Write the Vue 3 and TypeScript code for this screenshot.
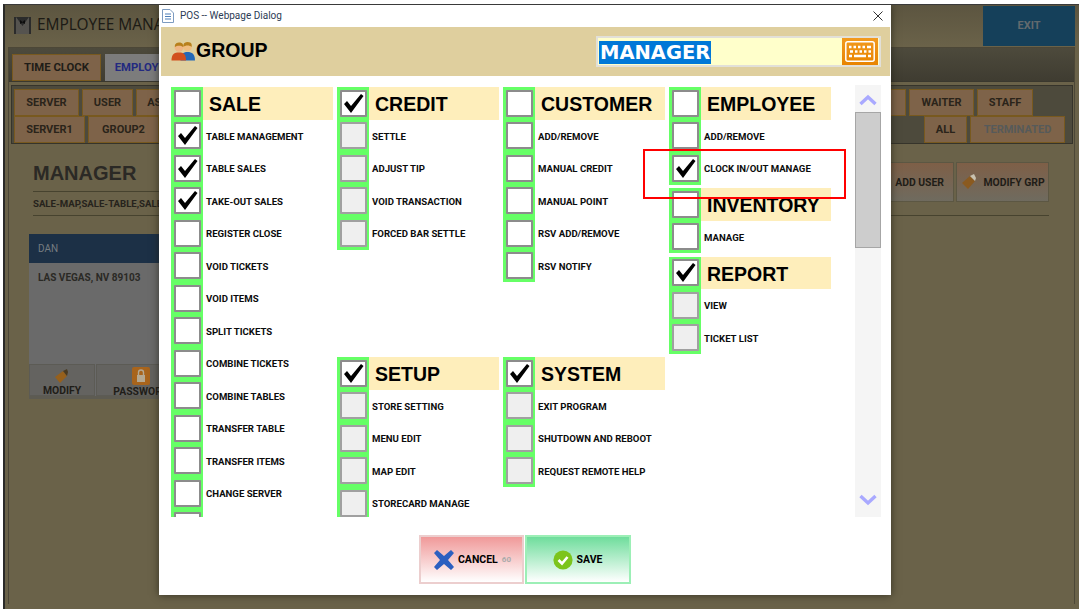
<template>
  <div class="app">
    <div class="top-bar">
      <svg class="tux" width="17" height="17" viewBox="0 0 17 17">
        <rect width="17" height="17" fill="#2b2b2b" />
        <path d="M2 0 L8.5 9 L15 0 L15 17 L2 17 Z" fill="#55534f" />
        <path d="M6 3 L8.5 5 L11 3 L11 7 L8.5 5.5 L6 7 Z" fill="#0c0c0c" />
      </svg>
      <span class="app-title">EMPLOYEE MANAGEMENT</span>
      <div class="exit">EXIT</div>
    </div>

    <div class="panel">
      <div class="tabstrip">
        <div class="tab">TIME CLOCK</div>
        <div class="tab active">EMPLOYEE</div>
      </div>

      <div class="subtabs">
        <div class="subrow">
          <div class="subtab w-server">SERVER</div>
          <div class="subtab w-user">USER</div>
          <div class="subtab w-as">ASSIST</div>
          <div class="spacer"></div>
          <div class="subtab w-bar">BAR</div>
          <div class="subtab w-waiter">WAITER</div>
          <div class="subtab w-staff">STAFF</div>
          <div class="end-gap-a"></div>
        </div>
        <div class="subrow">
          <div class="subtab w-server1">SERVER1</div>
          <div class="subtab w-group2">GROUP2</div>
          <div class="spacer"></div>
          <div class="subtab w-all">ALL</div>
          <div class="subtab w-term muted">TERMINATED</div>
          <div class="end-gap-b"></div>
        </div>
      </div>

      <div class="group-info">
        <div class="info-left">
          <div class="info-name">MANAGER</div>
          <div class="info-perms">SALE-MAP,SALE-TABLE,SALE-TOGO</div>
        </div>
        <div class="info-buttons">
          <div class="info-btn w-add">ADD USER</div>
          <div class="info-btn w-mod">
            <svg width="18" height="18" viewBox="0 0 18 18">
              <path d="M2 10 L10 3 L15 8 L8 16 Z" fill="#8a5a20" />
              <path d="M10 3 L14 1 L16 5 L15 8 Z" fill="#c9c2b0" />
            </svg>
            MODIFY GRP
          </div>
        </div>
      </div>

      <div class="user-card">
        <div class="card-head">DAN</div>
        <div class="card-body">LAS VEGAS, NV 89103</div>
        <div class="card-foot">
          <div class="card-btn">
            <svg width="16" height="16" viewBox="0 0 16 16">
              <path d="M1 9 L9 3 L13 8 L6 15 Z" fill="#96601c" />
              <path d="M9 3 L13 1 L14 4 L13 8 Z" fill="#4a3a20" />
            </svg>
            <span>MODIFY</span>
          </div>
          <div class="card-btn">
            <svg width="18" height="18" viewBox="0 0 18 18">
              <rect width="18" height="18" rx="2" fill="#a8641c" />
              <rect x="5" y="8" width="8" height="7" fill="#b5a890" />
              <path d="M6.5 8 V5.5 a2.5 2.5 0 0 1 5 0 V8" fill="none" stroke="#b5a890" stroke-width="1.4" />
            </svg>
            <span>PASSWORD</span>
          </div>
        </div>
      </div>
    </div>

    <div class="dialog">
      <div class="dialog-title">
        <svg width="12" height="14" viewBox="0 0 12 14">
          <path d="M.5.5 H8 L11.5 4 V13.5 H.5 Z" fill="#fff" stroke="#7d9bc0" />
          <path d="M3 5 H9 M3 7.5 H9 M3 10 H9" stroke="#4f7fb8" />
        </svg>
        <span>POS -- Webpage Dialog</span>
        <svg class="close" width="10" height="10" viewBox="0 0 10 10">
          <path d="M.5.5 L9.5 9.5 M9.5.5 L.5 9.5" stroke="#333" />
        </svg>
      </div>

      <div class="dialog-head">
        <svg class="people" width="25" height="19" viewBox="0 0 25 19">
          <circle cx="16.5" cy="5" r="4.4" fill="#f0bd80" />
          <path d="M16.5 0 C12 0 12 4 12.5 5 C14 3 19 3 20.5 5 C21 3 21 0 16.5 0 Z" fill="#b8801c" />
          <path d="M9.5 18.5 C9.5 12 12 10 16.5 10 C21 10 24 12 24 18.5 Z" fill="#2468b8" />
          <circle cx="8" cy="5.5" r="4.4" fill="#efb684" />
          <path d="M8 .6 C4 .6 3.6 4 4 5 C6 3.4 10 3.4 12 5 C12.4 3 12 .6 8 .6 Z" fill="#b8801c" />
          <path d="M.5 18.5 C.5 12 3.5 10.5 8 10.5 C12.5 10.5 15 12 15 18.5 Z" fill="#d2501e" />
        </svg>
        <span class="group-word">GROUP</span>
        <div class="name-input">
          <span class="selected">MANAGER</span>
          <div class="kbd-btn">
            <svg width="30" height="21" viewBox="0 0 30 21">
              <rect x=".8" y=".8" width="28.4" height="19.4" rx="2" fill="none" stroke="#fff" stroke-width="1.5" />
              <path d="M4 6 H6.5 M8.5 6 H11 M13 6 H15.5 M17.5 6 H20 M22 6 H26 M5 10.5 H8 M10 10.5 H12.5 M14.5 10.5 H17 M19 10.5 H21.5 M23.5 10.5 H26 M4 15 H7 M9 15 H21 M23 15 H26" stroke="#fff" stroke-width="2.4" />
            </svg>
          </div>
        </div>
      </div>

      <div class="dialog-body">
        <div class="columns">
          <div v-for="(col, c) in columns" :key="c" class="column">
            <section
              v-for="grp in col"
              :key="grp.title"
              class="perm-group"
              :style="{ marginTop: grp.offset + 'px' }"
            >
              <div class="perm-row">
                <div class="cell">
                  <div class="box">
                    <svg v-if="grp.on" viewBox="0 0 27 27" class="tick"><path :d="tick" /></svg>
                  </div>
                </div>
                <div class="head-text">{{ grp.title }}</div>
              </div>
              <div v-for="item in grp.items" :key="item.name" class="perm-row">
                <div class="cell">
                  <div class="box" :class="{ locked: grp.on }">
                    <svg v-if="item.on" viewBox="0 0 27 27" class="tick"><path :d="tick" /></svg>
                  </div>
                </div>
                <div class="label">{{ item.name }}</div>
              </div>
            </section>
          </div>
        </div>

        <div class="scrollbar">
          <svg width="18" height="12" viewBox="0 0 18 12">
            <path d="M1.5 10 L9 3 L16.5 10" fill="none" stroke="#a9a9ff" stroke-width="3.4" />
          </svg>
          <div class="thumb"></div>
          <div class="spacer"></div>
          <svg width="18" height="12" viewBox="0 0 18 12">
            <path d="M1.5 2 L9 9 L16.5 2" fill="none" stroke="#a9a9ff" stroke-width="3.4" />
          </svg>
        </div>
      </div>

      <div class="dialog-foot">
        <div class="foot-btn cancel">
          <svg width="20" height="20" viewBox="0 0 20 20">
            <path d="M3 0 L10 6 L17 0 L20 3 L14 10 L20 17 L17 20 L10 14 L3 20 L0 17 L6 10 L0 3 Z" fill="#2b5fc0" />
          </svg>
          <span>CANCEL</span>
          <small>60</small>
        </div>
        <div class="foot-btn save">
          <svg width="20" height="20" viewBox="0 0 20 20">
            <circle cx="10" cy="10" r="9.6" fill="#7cc41c" />
            <path d="M5.5 10 L9 13.5 L14.5 7" fill="none" stroke="#fff" stroke-width="2.6" />
          </svg>
          <span>SAVE</span>
        </div>
      </div>

      <div class="highlight"></div>
    </div>
  </div>
</template>

<script setup lang="ts">
interface PermItem {
  name: string;
  on?: boolean;
}
interface PermGroup {
  title: string;
  on?: boolean;
  offset?: number;
  items: PermItem[];
}

const tick = "M4 14 L7 11 L11 16 L21 4 L23.5 6 L11 23 Z";

const names = (...list: string[]): PermItem[] => list.map((name) => ({ name }));

const columns: PermGroup[][] = [
  [
    {
      title: "SALE",
      items: [
        { name: "TABLE MANAGEMENT", on: true },
        { name: "TABLE SALES", on: true },
        { name: "TAKE-OUT SALES", on: true },
        ...names(
          "REGISTER CLOSE",
          "VOID TICKETS",
          "VOID ITEMS",
          "SPLIT TICKETS",
          "COMBINE TICKETS",
          "COMBINE TABLES",
          "TRANSFER TABLE",
          "TRANSFER ITEMS",
          "CHANGE SERVER",
          " ",
        ),
      ],
    },
  ],
  [
    {
      title: "CREDIT",
      on: true,
      items: names("SETTLE", "ADJUST TIP", "VOID TRANSACTION", "FORCED BAR SETTLE"),
    },
    {
      title: "SETUP",
      on: true,
      offset: 107.5,
      items: names("STORE SETTING", "MENU EDIT", "MAP EDIT", "STORECARD MANAGE"),
    },
  ],
  [
    {
      title: "CUSTOMER",
      items: names("ADD/REMOVE", "MANUAL CREDIT", "MANUAL POINT", "RSV ADD/REMOVE", "RSV NOTIFY"),
    },
    {
      title: "SYSTEM",
      on: true,
      offset: 75,
      items: names("EXIT PROGRAM", "SHUTDOWN AND REBOOT", "REQUEST REMOTE HELP"),
    },
  ],
  [
    {
      title: "EMPLOYEE",
      items: [{ name: "ADD/REMOVE" }, { name: "CLOCK IN/OUT MANAGE", on: true }],
    },
    { title: "INVENTORY", offset: 3.5, items: names("MANAGE") },
    { title: "REPORT", on: true, offset: 3.5, items: names("VIEW", "TICKET LIST") },
  ],
];
</script>

<style scoped>
.app {
  position: relative;
  box-sizing: border-box;
  margin: 4px 0 0 3px;
  height: 605px;
  overflow: hidden;
  background: #6a6249;
  border-top: 1px solid #3a3a3a;
  border-left: 2px solid #2a2a28;
  font-family: Roboto, "Liberation Sans", sans-serif;
  color: #1f1d18;
}
.spacer {
  flex: 1;
}

/* page behind the dialog */
.top-bar {
  display: flex;
  align-items: center;
  height: 41px;
  padding-left: 9px;
  background: linear-gradient(#5c5540, #6a6249);
}
.app-title {
  margin: -2px 0 0 6px;
  width: 122px;
  overflow: hidden;
  white-space: nowrap;
  font: 15.4px "Noto Sans", sans-serif;
  color: #1d1b16;
}
.exit {
  margin-left: auto;
  margin-right: 4px;
  width: 92px;
  height: 40px;
  line-height: 40px;
  text-align: center;
  background: #15405a;
  color: #636a6e;
  font-weight: 700;
  font-size: 11px;
}
.panel {
  margin: 1px 4px 0 3px;
  height: 556px;
  border: 1px solid #4c4737;
  border-bottom: 0;
}
.tabstrip {
  display: flex;
  align-items: flex-end;
  gap: 4px;
  height: 33px;
  padding-left: 3px;
  background: linear-gradient(#4d4a3c, #3f3c31);
  border-bottom: 1px solid #3a382e;
}
.tab {
  box-sizing: border-box;
  width: 89px;
  height: 27px;
  line-height: 25px;
  text-align: center;
  background: #7e6349;
  border: 1px solid #78591f;
  font-size: 11.3px;
  font-weight: 700;
}
.tab.active {
  width: 76px;
  background: #7c7c7c;
  border-color: #7c7c7c;
  color: #232a80;
}
.subtabs {
  margin: 3px 1px 0 2px;
  height: 59px;
  box-sizing: border-box;
  padding-top: 3px;
  background: #4d4a3c;
  border: 1px solid #36342b;
}
.subrow {
  display: flex;
  gap: 3px;
  padding-left: 2px;
}
.subtab {
  box-sizing: border-box;
  height: 27px;
  line-height: 25px;
  text-align: center;
  background: #7e6349;
  border: 1px solid #78591f;
  font-size: 11px;
  font-weight: 700;
  color: #2a241a;
  white-space: nowrap;
  overflow: hidden;
}
.subtab.muted {
  color: #565a5a;
}
.w-server { width: 65px; }
.w-user { width: 51px; }
.w-as { width: 60px; }
.w-bar { width: 60px; }
.w-waiter { width: 65px; }
.w-staff { width: 56px; }
.w-server1 { width: 71px; }
.w-group2 { width: 71px; }
.w-all { width: 43px; }
.w-term { width: 95px; }
.end-gap-a { width: 36px; }
.end-gap-b { width: 4px; }
.group-info {
  display: flex;
  margin: 18px 25px 0 24px;
  height: 53px;
  border-bottom: 1px solid #47432f;
}
.info-left {
  flex: 1;
  min-width: 0;
}
.info-name {
  height: 29px;
  line-height: 22px;
  font-size: 20px;
  font-weight: 700;
  color: #2b2925;
  font-family: "Liberation Sans", sans-serif;
  border-bottom: 1px solid #47432f;
}
.info-perms {
  margin-top: 6px;
  font-size: 9.6px;
  font-weight: 700;
  color: #26231c;
}
.info-buttons {
  display: flex;
  gap: 2px;
  height: 40px;
}
.info-btn {
  display: flex;
  align-items: center;
  justify-content: center;
  gap: 5px;
  box-sizing: border-box;
  background: linear-gradient(#7e5f47, #6f6b5f);
  border: 1px solid #5c5743;
  font-size: 10.4px;
  font-weight: 700;
}
.w-add {
  width: 90px;
  justify-content: flex-end;
  padding-right: 9px;
}
.w-mod { width: 93px; }
.user-card {
  margin: 18px 0 0 20px;
  width: 320px;
  height: 162px;
  display: flex;
  flex-direction: column;
  background: #6a6a6a;
  border-bottom: 3px solid #5d5b52;
}
.card-head {
  height: 29px;
  line-height: 29px;
  padding-left: 9px;
  background: #1c3046;
  color: #767b80;
  font-size: 10px;
}
.card-body {
  flex: 1;
  padding: 9px 9px 0;
  font-size: 10px;
  font-weight: 700;
  color: #2a2925;
}
.card-foot {
  display: flex;
  height: 32px;
  gap: 1px;
}
.card-btn {
  width: 66px;
  height: 32px;
  overflow: hidden;
  display: flex;
  flex-direction: column;
  align-items: center;
  gap: 1px;
  padding-top: 3px;
  box-sizing: border-box;
  background: #646360;
  border: 1px solid #5c5b55;
  font-size: 10.4px;
  font-weight: 700;
  line-height: 11px;
}
.card-btn svg {
  flex: none;
}
.card-btn + .card-btn {
  width: 90px;
  padding-top: 2px;
}

/* dialog */
.dialog {
  position: absolute;
  left: 154px;
  top: 0;
  width: 732px;
  height: 590px;
  display: flex;
  flex-direction: column;
  background: #fff;
  box-shadow: 0 0 8px rgba(30, 30, 20, 0.7);
  color: #000;
  font-family: "Liberation Sans", sans-serif;
}
.dialog-title {
  display: flex;
  align-items: center;
  gap: 6px;
  height: 21px;
  margin-bottom: 1px;
  flex: none;
  padding: 0 8px 0 3px;
  font: 10px Roboto, sans-serif;
  color: #2d3b55;
}
.close {
  margin-left: auto;
}
.dialog-head {
  flex: none;
  display: flex;
  align-items: center;
  height: 49px;
  margin: 0 1px 0 2px;
  padding: 0 9px 0 10px;
  background: #dfcf9e;
}
.group-word {
  margin-bottom: 2px;
  font-size: 19.5px;
  font-weight: 700;
}
.name-input {
  margin-left: auto;
  box-sizing: border-box;
  width: 285px;
  height: 31px;
  display: flex;
  align-items: center;
  justify-content: space-between;
  padding: 0 1px 0 1px;
  background: #ffffcb;
  border: 2px solid #e2e0d8;
}
.selected {
  padding: 0 1px;
  margin-top: 1px;
  background: #0078d7;
  color: #fff;
  font: 700 19.5px/23px "DejaVu Sans", sans-serif;
}
.kbd-btn {
  width: 36px;
  height: 27px;
  display: flex;
  align-items: center;
  justify-content: center;
  background: linear-gradient(#f29a1e, #e88400);
}
.dialog-body {
  flex: none;
  display: flex;
  height: 430px;
  margin-top: 11px;
  padding-left: 12px;
}
.columns {
  display: flex;
  gap: 4px;
  width: 660px;
  height: 430px;
  overflow: hidden;
}
.column {
  width: 162px;
}
.perm-row {
  display: flex;
  align-items: center;
  height: 32.5px;
}
.cell {
  box-sizing: border-box;
  flex: none;
  width: 32px;
  height: 100%;
  display: flex;
  align-items: center;
  padding-left: 3px;
  background: #66ff66;
}
.box {
  box-sizing: border-box;
  width: 27px;
  height: 27px;
  background: #fff;
  border: 2px solid #8c8c8c;
  border-radius: 1px;
  overflow: hidden;
}
.box.locked {
  background: #efefef;
  border-color: #a0a0a0;
}
.tick {
  display: block;
  margin: -2px;
  width: 27px;
  height: 27px;
}
.tick path {
  fill: #000;
}
.head-text {
  flex: 1;
  align-self: stretch;
  line-height: 34px;
  padding-left: 6px;
  background: #feeebb;
  font-size: 19.5px;
  font-weight: 700;
}
.label {
  padding: 1px 0 0 3px;
  font: 700 9.6px Roboto, sans-serif;
  color: #0c0c0c;
  white-space: nowrap;
}
.scrollbar {
  box-sizing: border-box;
  margin: -2px 0 0 24px;
  width: 26px;
  height: 432px;
  display: flex;
  flex-direction: column;
  align-items: center;
  padding-top: 9px;
  background: #f5f5f5;
}
.thumb {
  box-sizing: border-box;
  flex: none;
  width: 26px;
  height: 136px;
  margin-top: 6px;
  background: #cdcdcd;
  border: 1px solid #a6a6a6;
}
.scrollbar svg:last-child {
  margin-bottom: 11px;
}
.dialog-foot {
  display: flex;
  justify-content: center;
  gap: 1px;
  margin-top: 18px;
  padding-right: 1px;
}
.foot-btn {
  box-sizing: border-box;
  height: 49px;
  display: flex;
  align-items: center;
  justify-content: center;
  gap: 4px;
  font: 700 10.5px Roboto, sans-serif;
}
.foot-btn small {
  font-size: 8px;
  color: #aaa;
}
.cancel {
  width: 105px;
  padding-left: 3px;
  background: linear-gradient(#f09999, #fff);
  border: 2px solid #eccece;
}
.save {
  width: 106px;
  background: linear-gradient(#6fdd9c, #fff);
  border: 2px solid #9cefb6;
}
.highlight {
  position: absolute;
  left: 484px;
  top: 144px;
  box-sizing: border-box;
  width: 203px;
  height: 50px;
  border: 2.5px solid #f00;
}
</style>

<style>
html,
body {
  background: #fff;
}
</style>
